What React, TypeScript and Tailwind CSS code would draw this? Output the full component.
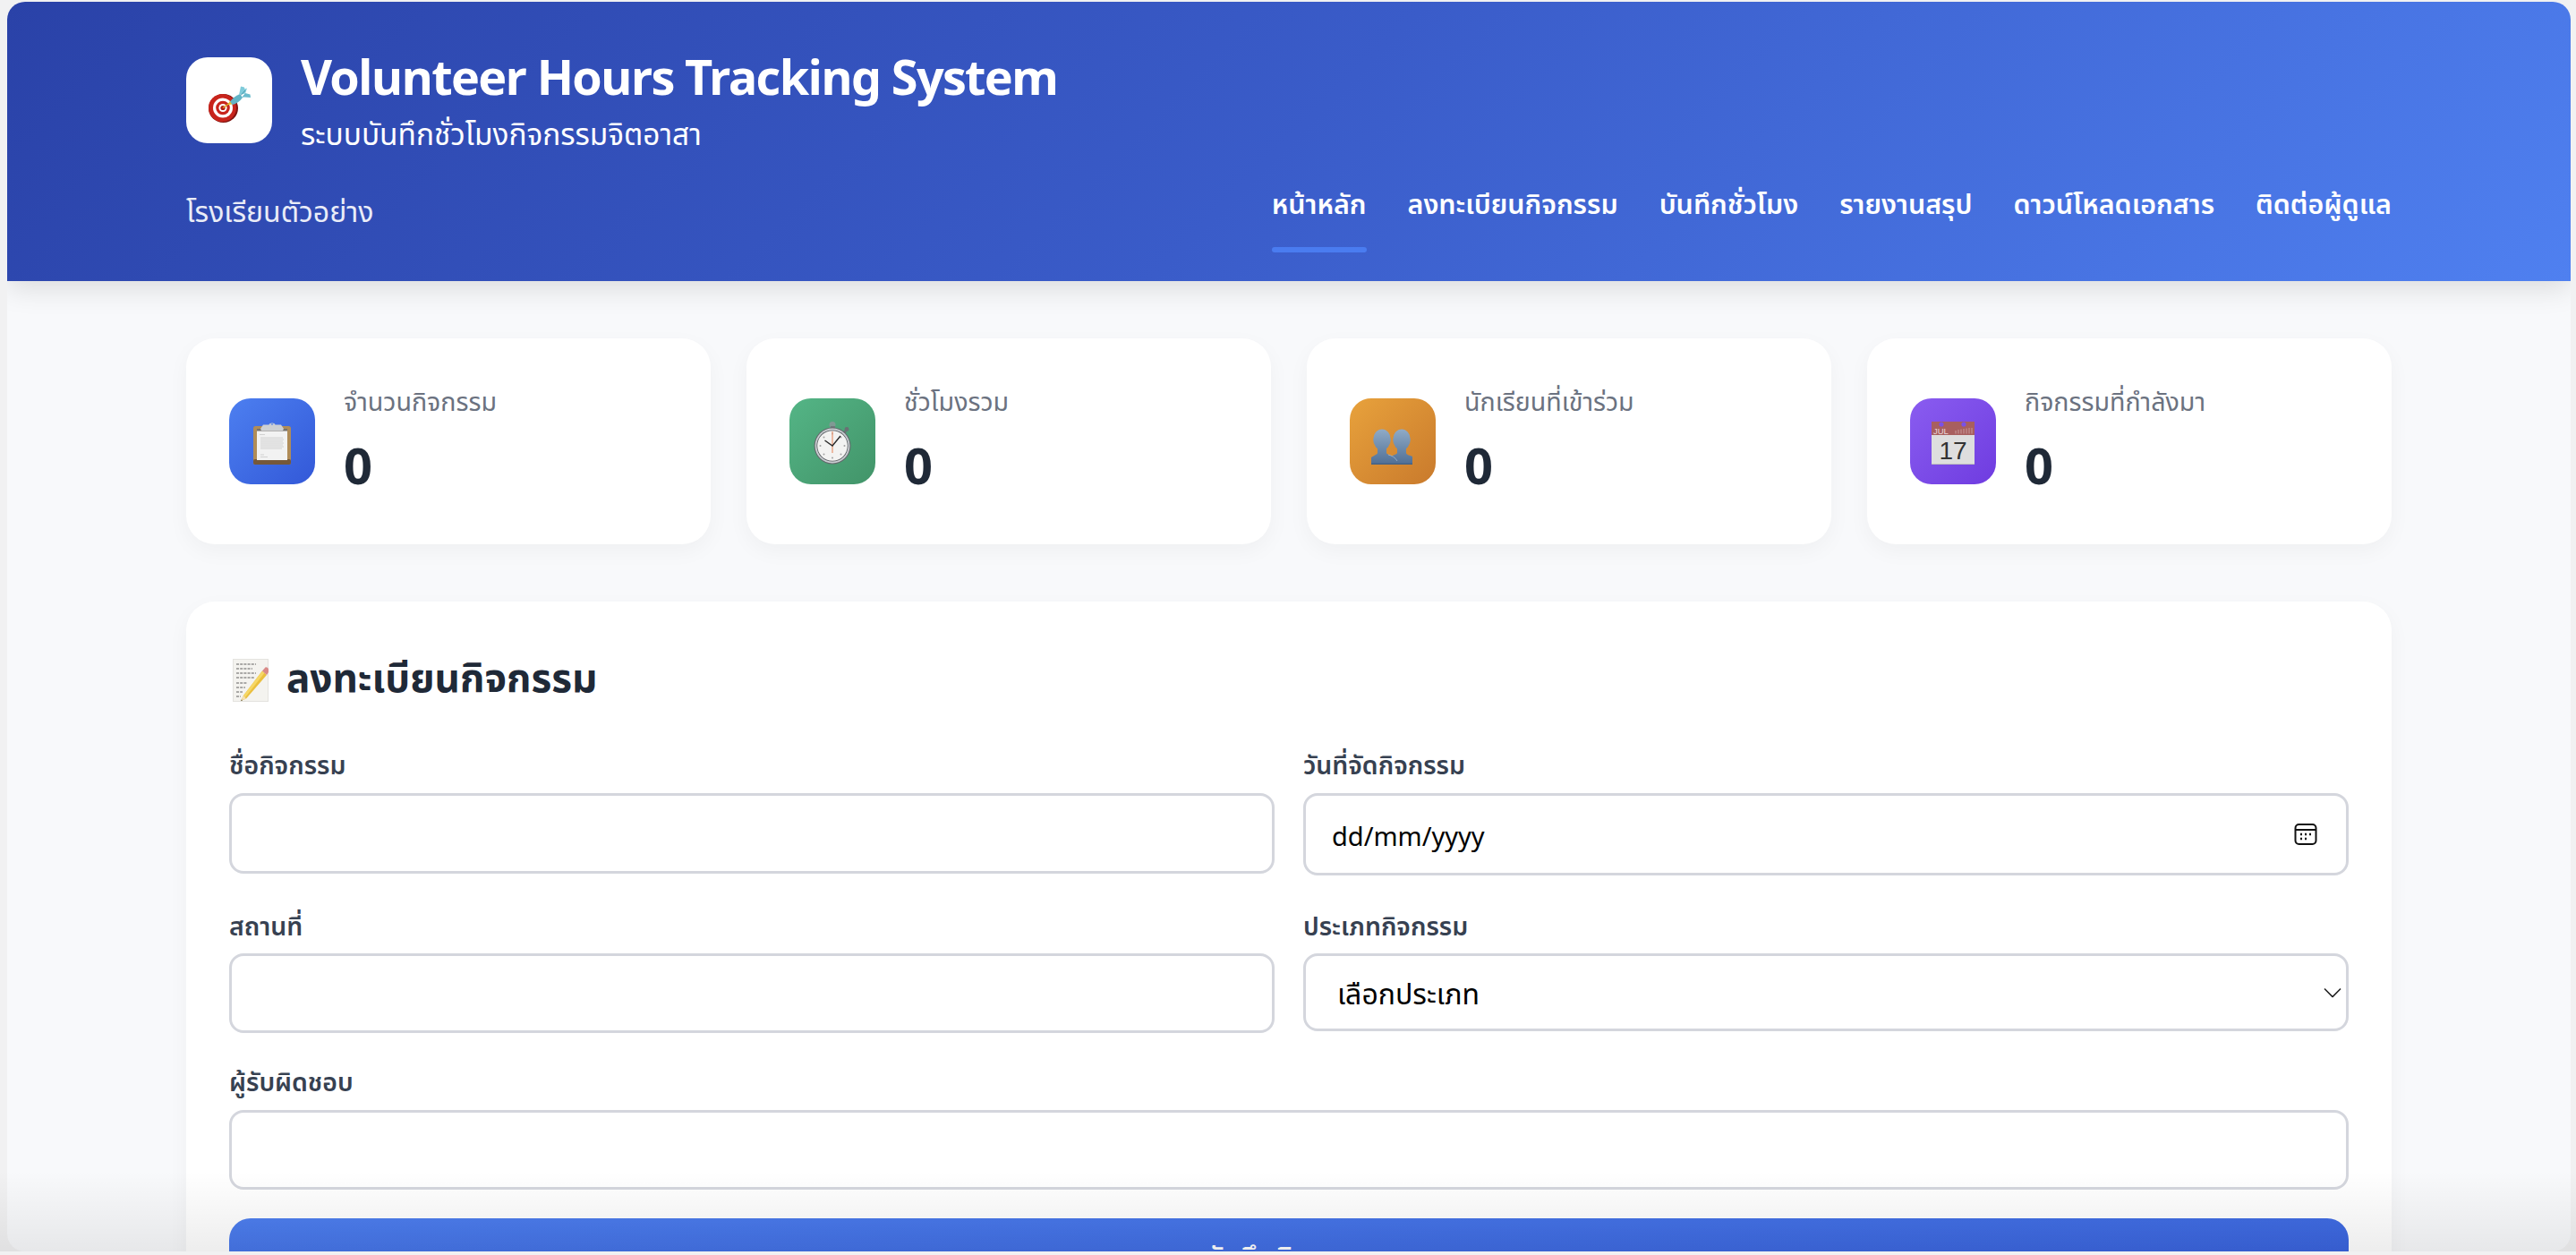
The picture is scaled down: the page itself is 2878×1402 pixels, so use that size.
/* ── Emoji drawings (no emoji font in the sandbox) ───── */

function TargetIcon() {
  return (
    <svg width="48" height="48" viewBox="0 0 48 48">
      <ellipse cx="17.5" cy="31" rx="16.5" ry="16" fill="#7f1410" />
      <ellipse cx="16.5" cy="30.5" rx="15.5" ry="15.5" fill="#c8241c" />
      <ellipse cx="17" cy="30.5" rx="11" ry="11" fill="#fff" />
      <ellipse cx="17" cy="30.5" rx="7.8" ry="7.8" fill="#c8241c" />
      <ellipse cx="17" cy="30.5" rx="4.6" ry="4.6" fill="#fff" />
      <ellipse cx="17" cy="30.5" rx="2.6" ry="2.6" fill="#b31a14" />
      <path d="M17 30.5 25 25" stroke="#d9a520" strokeWidth="1.5" />
      <path d="M22.5 27 25 22.5 28 26.5Z" fill="#e8c030" />
      <path d="M25 23.5C28 19.5 32 16.5 36 15L39 19C36 23.5 32 26 27.5 27Z" fill="#62b4c6" />
      <path d="M35 16 37 6.5 41 7.5 41.5 9.5 44 8.5 42 14.5Z" fill="#7fcbda" />
      <path d="M38 19 42 14 47.5 15.5 48 19 41 18.5Z" fill="#6cbccd" />
      <path d="M37 16.5 42 11" stroke="#3f8ea3" strokeWidth="0.9" />
    </svg>
  );
}

function ClipboardIcon() {
  return (
    <svg width="48" height="48" viewBox="0 0 48 48">
      <rect x="3" y="5" width="42" height="43" rx="2.5" fill="#b08c58" />
      <rect x="3" y="42" width="42" height="6" rx="2" fill="#75583a" />
      <rect x="7" y="8" width="34" height="35" fill="#f2f2f2" />
      <rect x="7" y="8" width="34" height="2.5" fill="#77736e" />
      <g stroke="#c9c9c9" strokeWidth="0.8">
        <path d="M10 14.5H16M11 18H36M11 20H37M11 22H36M11 24H37M11 26H36M11 28H37M11 30H35M11 37H15M11 39.5H19" />
      </g>
      <path d="M11 8 14 3.5H20.5C21 .8 27 .8 27.5 3.5H34L37 8 36 10H12Z" fill="#cdd0d3" />
      <circle cx="24" cy="2.8" r="1.3" fill="#7a9be0" />
    </svg>
  );
}

function StopwatchIcon() {
  return (
    <svg width="48" height="48" viewBox="0 0 48 48">
      <circle cx="24" cy="3.5" r="3.5" fill="#7f9a94" />
      <rect x="22" y="5" width="5" height="4" fill="#70787c" />
      <circle cx="40" cy="8.5" r="2.4" fill="#6a7074" />
      <path d="M37 10.5 39 12.5" stroke="#6a7074" strokeWidth="2.5" />
      <circle cx="24" cy="27" r="20.5" fill="#64686c" />
      <circle cx="24" cy="27" r="19.4" fill="#c8cdd1" />
      <circle cx="24" cy="27" r="17.6" fill="#55585c" />
      <circle cx="24" cy="27" r="16.8" fill="#f3f3f2" />
      <g fill="#a2a2a2">
        <circle cx="24" cy="13.5" r="1" />
        <circle cx="24" cy="40.5" r="1" />
        <circle cx="10.5" cy="27" r="1" />
        <circle cx="37.5" cy="27" r="1" />
        <circle cx="14.5" cy="17.5" r="1" />
        <circle cx="33.5" cy="17.5" r="1" />
        <circle cx="14.5" cy="36.5" r="1" />
        <circle cx="33.5" cy="36.5" r="1" />
      </g>
      <path d="M24 11V35" stroke="#e8a080" strokeWidth="1.4" />
      <path d="M15.5 21 24 27 33 16" stroke="#2a2a2a" strokeWidth="1.4" fill="none" />
    </svg>
  );
}

function BustsIcon() {
  return (
    <svg width="48" height="48" viewBox="0 0 48 48">
      <defs>
        <linearGradient id="bustFill" gradientUnits="userSpaceOnUse" x1="0" y1="9" x2="0" y2="48">
          <stop offset="0" stopColor="#8faac6" />
          <stop offset="1" stopColor="#4f6f95" />
        </linearGradient>
      </defs>
      <ellipse cx="34" cy="20" rx="9.8" ry="11.5" fill="url(#bustFill)" />
      <path d="M29 29H39V35C39 37 44 38 46 39V48H20V40C22 38 29 37 29 35Z" fill="url(#bustFill)" />
      <ellipse cx="12" cy="20" rx="9.8" ry="11.5" fill="url(#bustFill)" />
      <path d="M7 29H17V35C17 37 24 38 26 40V48H0V40C2 38 7 37 7 35Z" fill="url(#bustFill)" />
      <path d="M19 37C23 38 27 40 29 44" stroke="#a9bdd2" strokeWidth="0.7" fill="none" />
      <rect x="0" y="46.5" width="46" height="1.5" fill="#456285" />
    </svg>
  );
}

function CalendarIcon() {
  return (
    <svg width="48" height="48" viewBox="0 0 48 48">
      <rect x="0" y="0" width="48" height="48" fill="#dedede" />
      <rect x="0" y="0" width="48" height="15" fill="#a85f5f" />
      <rect x="0" y="47" width="48" height="1" fill="#bdbdbd" />
      <circle cx="11" cy="3" r="2.6" fill="#7a50e8" />
      <circle cx="36" cy="3" r="2.6" fill="#7a50e8" />
      <text x="2" y="13.5" fontSize="9.5" fill="#e8d8d8" fontFamily="'Liberation Sans', sans-serif">JUL</text>
      <g stroke="#c89a9a" strokeWidth="1">
        <path d="M27 13.5V10M30 13.5V9M33 13.5V8.5M36 13.5V8M39 13.5V7.5M42 13.5V7M45 13.5V7" />
      </g>
      <text x="24" y="42" textAnchor="middle" fontSize="28" fill="#333" fontFamily="'Liberation Sans', sans-serif">17</text>
    </svg>
  );
}

function MemoIcon() {
  return (
    <svg width="40" height="48" viewBox="0 0 40 48">
      <rect x="0" y="0" width="40" height="48" fill="#e4e3df" />
      <rect x="1" y="1" width="38" height="46" fill="#f4f3ef" />
      <g stroke="#4f4f4f" strokeWidth="0.9" strokeDasharray="3 1.2">
        <path d="M4 6H26M4 11H22M4 16H26M4 21H24M4 27H16M4 32H14M4 37H11M4 42H9" />
      </g>
      <path d="M12 41 9 47 15 44.5 38 18 33 13.5Z" fill="#eabf3e" />
      <path d="M12 41 33 13.5 35.5 15.8 14 43Z" fill="#f6d765" />
      <path d="M12 41 9.5 46.5 15 44.5Z" fill="#f3dfb6" />
      <path d="M9.8 45.5 9.2 47 11 46.2Z" fill="#333" />
      <path d="M33 13.5 36.5 9.5C38 8.2 42 12 40 15L38 18Z" fill="#d98a88" />
    </svg>
  );
}

/* ── Data ────────────────────────────────────────────── */

const navItems = ["หน้าหลัก", "ลงทะเบียนกิจกรรม", "บันทึกชั่วโมง", "รายงานสรุป", "ดาวน์โหลดเอกสาร", "ติดต่อผู้ดูแล"];

const stats = [
  { label: "จำนวนกิจกรรม", gradient: "bg-gradient-to-br from-[#4d7ff0] to-[#3358d8]", icon: <ClipboardIcon /> },
  { label: "ชั่วโมงรวม", gradient: "bg-gradient-to-br from-[#54b586] to-[#429469]", icon: <StopwatchIcon /> },
  { label: "นักเรียนที่เข้าร่วม", gradient: "bg-gradient-to-br from-[#e8a23c] to-[#c97a2c]", icon: <BustsIcon /> },
  { label: "กิจกรรมที่กำลังมา", gradient: "bg-gradient-to-br from-[#8a5cf0] to-[#6f3be0]", icon: <CalendarIcon /> },
];

const fieldLabel = "block text-[28.4px] leading-[44px] font-semibold text-[#374151]";
const fieldBox = "block w-full rounded-[16px] border-[3px] border-[#d4d6dd] bg-white";

/* ── Main Page ───────────────────────────────────────── */

export default function App() {
  return (
    <div className="relative h-[1402px] w-full overflow-hidden bg-[#f1f1f2] pt-[2px] pr-[6px] pl-[8px] [font-family:'Noto_Sans_Thai','Noto_Sans',sans-serif]">
      <div className="h-[1396px] overflow-hidden rounded-[20px] bg-[#f8f9fb]">
        {/* Header */}
        <header className="relative h-[312px] bg-[linear-gradient(135deg,#2a42a8_0%,#3a5cc9_50%,#4f80f0_100%)] px-[200px] pt-[56px] text-white shadow-[0_8px_30px_rgba(0,0,0,0.12)]">
          <div className="flex items-start gap-[32px]">
            <div className="mt-[6px] flex h-[96px] w-[96px] items-center justify-center rounded-[24px] bg-white pt-[4px]">
              <TargetIcon />
            </div>
            <div>
              <h1 className="text-[54px] leading-[64px] font-bold tracking-[-1.7px]">Volunteer Hours Tracking System</h1>
              <p className="mt-[8px] text-[33.4px] leading-[44px]">ระบบบันทึกชั่วโมงกิจกรรมจิตอาสา</p>
            </div>
          </div>
          <div className="mt-[32px] flex items-start justify-between">
            <div className="mt-[8px] text-[32px] leading-[48px] text-white/90">โรงเรียนตัวอย่าง</div>
            <nav className="flex gap-[46px]">
              {navItems.map((item, i) => (
                <a key={item} className="block text-[30.4px] leading-[48px] font-semibold">
                  {item}
                  <div className={`mt-[22px] h-[6px] rounded-[3px] ${i === 0 ? "bg-[#4a7cf0]" : ""}`} />
                </a>
              ))}
            </nav>
          </div>
        </header>

        <main className="px-[200px] pt-[64px]">
          {/* Stat cards */}
          <div className="grid grid-cols-4 gap-[40px]">
            {stats.map((s) => (
              <div key={s.label} className="flex h-[230px] items-center gap-[32px] rounded-[32px] bg-white px-[48px] shadow-[0_8px_24px_rgba(0,0,0,0.04)]">
                <div className={`flex h-[96px] w-[96px] items-center justify-center rounded-[24px] pt-[4px] ${s.gradient}`}>
                  {s.icon}
                </div>
                <div>
                  <div className="text-[28.6px] leading-[44px] text-[#6b7280]">{s.label}</div>
                  <div className="mt-[17px] text-[56px] leading-[68px] font-bold text-[#1f2937]">0</div>
                </div>
              </div>
            ))}
          </div>

          {/* Form */}
          <section className="mt-[64px] rounded-[32px] bg-white p-[48px] shadow-[0_8px_24px_rgba(0,0,0,0.04)]">
            <h2 className="flex h-[80px] items-center gap-[20px] pl-[4px] text-[44px] font-bold text-[#1f2937]">
              <MemoIcon />
              ลงทะเบียนกิจกรรม
            </h2>

            <div className="mt-[35px] grid grid-cols-2 gap-x-[32px]">
              <div>
                <label className={fieldLabel}>ชื่อกิจกรรม</label>
                <input type="text" className={`mt-[7px] h-[90px] ${fieldBox}`} />
              </div>
              <div>
                <label className={fieldLabel}>วันที่จัดกิจกรรม</label>
                <div className={`mt-[7px] flex h-[92px] items-center justify-between pr-[32px] pl-[29px] ${fieldBox}`}>
                  <span className="pt-[9px] text-[29px] text-black">dd/mm/yyyy</span>
                  <svg width="26" height="26" viewBox="0 0 26 26" fill="none" stroke="#111" strokeWidth="2">
                    <rect x="1.5" y="2" width="23" height="22" rx="4" />
                    <path d="M1.5 8H24.5" />
                    <path d="M7 13H9M12 13H14M17 13H19M7 18H9M12 18H14" strokeWidth="2.4" />
                  </svg>
                </div>
              </div>
              <div className="mt-[37px]">
                <label className={fieldLabel}>สถานที่</label>
                <input type="text" className={`mt-[6px] h-[89px] ${fieldBox}`} />
              </div>
              <div className="mt-[37px]">
                <label className={fieldLabel}>ประเภทกิจกรรม</label>
                <div className="relative mt-[6px]">
                  <select className={`h-[87px] appearance-none pt-[7px] pl-[35px] text-[32px] text-black outline-none ${fieldBox}`}>
                    <option>เลือกประเภท</option>
                  </select>
                  <svg className="absolute top-1/2 right-[8px] -translate-y-1/2" width="20" height="11" viewBox="0 0 20 11" fill="none" stroke="#222" strokeWidth="1.6">
                    <path d="M1 1 10 10 19 1" />
                  </svg>
                </div>
              </div>
              <div className="col-span-2 mt-[35px]">
                <label className={fieldLabel}>ผู้รับผิดชอบ</label>
                <input type="text" className={`mt-[7px] h-[89px] ${fieldBox}`} />
              </div>
            </div>

            <button className="mt-[32px] h-[90px] w-full rounded-[24px] bg-gradient-to-br from-[#4d7eee] to-[#3358d6] text-[32px] font-semibold text-white">
              บันทึกกิจกรรม
            </button>
          </section>
        </main>
      </div>

      {/* Window shadow that falls over the bottom edge */}
      <div className="pointer-events-none absolute inset-x-0 bottom-[4px] h-[90px] bg-gradient-to-b from-transparent to-black/[0.07]" />
    </div>
  );
}
